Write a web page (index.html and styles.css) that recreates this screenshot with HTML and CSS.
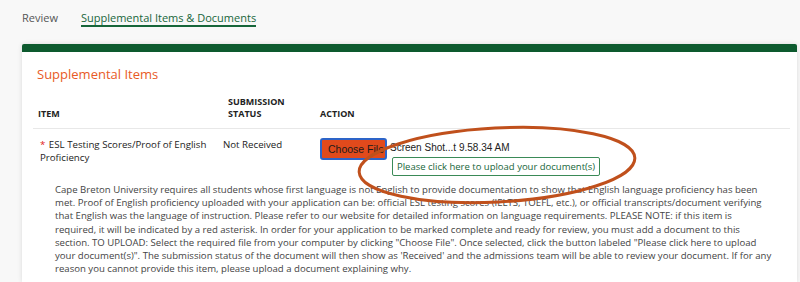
FILE: index.html
```html
<!doctype html>
<html lang="en-us">

<head>
    <title>Supplemental Items &amp; Documents</title>
    <link rel="stylesheet" href="styles.css">
</head>

<body>
    <div class="tabs">
        <a class="tab">Review</a>
        <a class="tab active">Supplemental Items &amp; Documents</a>
    </div>

    <div class="card">
        <div class="card-body">
            <h2 class="section-title">Supplemental Items</h2>

            <table class="items">
                <tr class="head">
                    <th class="col-item">Item</th>
                    <th class="col-status">Submission<br>Status</th>
                    <th class="col-action">Action</th>
                </tr>
                <tr class="row">
                    <td class="col-item"><span class="req">*</span> ESL Testing Scores/Proof of English Proficiency</td>
                    <td class="col-status">Not Received</td>
                    <td class="col-action">
                        <div class="file-line">
                            <button class="choose">Choose File</button>
                            <span class="file-name">Screen Shot...t 9.58.34 AM</span>
                        </div>
                        <button class="upload">Please click here to upload your document(s)</button>
                    </td>
                </tr>
            </table>

            <p class="note">Cape Breton University requires all students whose first language is not English to provide documentation to show that English language proficiency has been met. Proof of English proficiency uploaded with your application can be: official ESL testing scores (IELTS, TOEFL, etc.), or official transcripts/document verifying that English was the language of instruction. Please refer to our website for detailed information on language requirements. PLEASE NOTE: if this item is required, it will be indicated by a red asterisk. In order for your application to be marked complete and ready for review, you must add a document to this section. TO UPLOAD: Select the required file from your computer by clicking "Choose File". Once selected, click the button labeled "Please click here to upload your document(s)". The submission status of the document will then show as 'Received' and the admissions team will be able to review your document. If for any reason you cannot provide this item, please upload a document explaining why.</p>
        </div>
    </div>

    <!-- hand drawn highlight over the upload controls -->
    <svg class="circle" width="800" height="282" viewBox="0 0 800 282">
        <ellipse cx="497" cy="165" rx="138" ry="37" transform="rotate(-3 497 165)" />
    </svg>
</body>

</html>
```

FILE: styles.css
```css
body {
    margin: 0;
    background-color: #f8f8f8;
    font-family: 'Open Sans', 'Liberation Sans', sans-serif;
    color: #333;
    height: 282px;
    overflow: hidden;
    position: relative;
}

.tabs {
    display: flex;
    gap: 23px;
    padding: 10px 0 0 22px;
    height: 34px;
    box-sizing: border-box;
}

.tab {
    font-size: 11px;
    line-height: 15px;
    color: #555;
    height: 15px;
}

.tab.active {
    color: #17663a;
    border-bottom: 2px solid #17663a;
}

.card {
    margin: 10px 3px 0 22px;
    background-color: #fff;
    border-top: 8px solid #0d5a2e;
    border-radius: 2px 2px 0 0;
    box-shadow: 0 0 5px rgba(0, 0, 0, 0.12);
    height: 230px;
}

.card-body {
    padding: 0 7px 0 11px;
}

.section-title {
    margin: 0;
    padding: 12px 0 0 4px;
    font-size: 13px;
    font-weight: normal;
    line-height: 20px;
    color: #e85a26;
}

.items {
    width: 100%;
    border-collapse: collapse;
    table-layout: fixed;
    margin-top: 12px;
}

.items th,
.items td {
    box-sizing: border-box;
}

.items th {
    text-align: left;
    font-size: 9px;
    font-weight: bold;
    text-transform: uppercase;
    line-height: 12px;
    color: #222;
    vertical-align: bottom;
    padding: 0 0 8px 5px;
    border-bottom: 1px solid #e8e8e8;
}

.col-item {
    width: 190px;
}

.col-status {
    width: 92px;
}

.items td {
    vertical-align: top;
    font-size: 9.7px;
    line-height: 12.5px;
    color: #222;
    padding: 10px 0 0 0;
}

.items td.col-item {
    padding-left: 7px;
    padding-right: 8px;
}

.items td.col-action {
    padding-left: 5px;
    padding-top: 9px;
}

.req {
    color: #e02020;
    margin-right: 1px;
}

.file-line {
    display: flex;
    align-items: center;
    gap: 3px;
}

.choose {
    width: 67px;
    height: 22px;
    padding: 0 0 0 6px;
    text-align: left;
    white-space: nowrap;
    overflow: hidden;
    background-color: #e14a1c;
    border: 2px solid #2d64c8;
    border-radius: 3px;
    font-family: 'Liberation Sans', Arial, sans-serif;
    font-size: 10.5px;
    color: #1a1a1a;
}

.file-name {
    font-family: 'Liberation Sans', Arial, sans-serif;
    font-size: 10px;
    color: #222;
    margin-top: -2px;
}

.upload {
    display: block;
    margin: -3px 0 0 72px;
    height: 19px;
    padding: 0 4px;
    background-color: #fff;
    border: 1px solid #3a8a57;
    border-radius: 2px;
    font-family: 'Open Sans', sans-serif;
    font-size: 9.5px;
    color: #17663a;
}

.note {
    margin: 7px 17px 0 22px;
    font-size: 9.6px;
    line-height: 13.2px;
    color: #444;
}

.circle {
    position: absolute;
    left: 0;
    top: 0;
    pointer-events: none;
}

.circle ellipse {
    fill: none;
    stroke: #c0501c;
    stroke-width: 3;
}
```
